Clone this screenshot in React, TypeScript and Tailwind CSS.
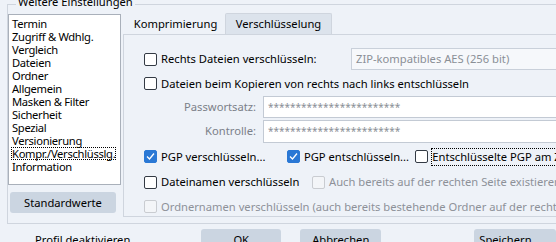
import React from "react";

function Cb({ state }: { state: "on" | "off" | "dis" }) {
  if (state === "on") {
    return (
      <span className="w-[13px] h-[13px] shrink-0 rounded-[2px] bg-[#2a78d5] border border-[#2a78d5] flex items-center justify-center">
        <svg width="11" height="11" viewBox="0 0 11 11">
          <polyline points="2,5.5 4.5,8 9,2.5" fill="none" stroke="white" strokeWidth="1.3" />
        </svg>
      </span>
    );
  }
  if (state === "dis") {
    return <span className="w-[13px] h-[13px] shrink-0 rounded-[2px] border border-[#c9ccd1] bg-[#f3f5f8]" />;
  }
  return <span className="w-[13px] h-[13px] shrink-0 rounded-[2px] border border-[#333a44] bg-white" />;
}

const items = [
  "Termin",
  "Zugriff & Wdhlg.",
  "Vergleich",
  "Dateien",
  "Ordner",
  "Allgemein",
  "Masken & Filter",
  "Sicherheit",
  "Spezial",
  "Versionierung",
  "Kompr./Verschlüsslg.",
  "Information",
];

export default function App() {
  return (
    <div className="w-[556px] h-[242px] overflow-hidden whitespace-nowrap bg-[#eef2f8] text-[11.2px] leading-[16px] text-black font-['Noto_Sans',sans-serif]">
      <div className="relative mt-[4px] ml-[7px] w-[620px] h-[220px] border border-[#cfd5de]">
        <span className="absolute left-[8px] top-[-11px] px-[2px] bg-[#eef2f8] leading-[16px]">Weitere Einstellungen</span>
        <div className="flex">
          <div className="w-[113px] mt-[9px] flex flex-col">
            <div className="h-[171px] bg-white border border-[#a9b0ba] pt-[2px] pl-[2px] tracking-[-0.3px]">
              {items.map((t) => (
                <div key={t} className="h-[13px] leading-[13px] flex">
                  {t === "Kompr./Verschlüsslg." ? (
                    <span className="outline outline-1 outline-dotted outline-black outline-offset-[-1px] px-[1px]">{t}</span>
                  ) : (
                    <span className="px-[1px]">{t}</span>
                  )}
                </div>
              ))}
            </div>
            <div className="mt-[7px] ml-[2px] w-[106px] h-[21px] rounded-[3px] bg-[#cbd5e1] flex items-center justify-center">
              Standardwerte
            </div>
          </div>
          <div className="ml-[2px] mt-[8px] flex flex-col">
            <div className="flex h-[21px] items-end">
              <div className="ml-[3px] w-[99px] h-[20px] flex items-center justify-center">Komprimierung</div>
              <div className="w-[107px] h-[21px] bg-[#dce3ec] border border-b-0 border-[#cfd5de] rounded-t-[2px] flex items-center justify-center">
                Verschlüsselung
              </div>
            </div>
            <div className="w-[500px] h-[183px] border border-[#cfd5de] pt-[13px] pl-[20px] flex flex-col">
              <div className="h-[22px] flex items-center">
                <div className="w-[207px] flex items-center gap-[4px]">
                  <Cb state="off" />
                  <span>Rechts Dateien verschlüsseln:</span>
                </div>
                <div className="w-[260px] h-[22px] border border-[#c9d0da] bg-[#f6f8fb] flex items-center pl-[4px] text-[#8a8f96]">
                  ZIP-kompatibles AES (256 bit)
                </div>
              </div>
              <div className="h-[22px] mt-[3px] flex items-center gap-[4px]">
                <Cb state="off" />
                <span>Dateien beim Kopieren von rechts nach links entschlüsseln</span>
              </div>
              <div className="h-[22px] mt-[1px] flex items-center">
                <div className="w-[112px] text-right text-[#7b8088]">Passwortsatz:</div>
                <div className="ml-[7px] w-[320px] h-[22px] border border-[#c3cad4] bg-white flex items-center pl-[4px] text-[#8a8f96] text-[10px]">
                  ************************
                </div>
              </div>
              <div className="h-[23px] mt-[2px] flex items-center">
                <div className="w-[112px] text-right text-[#7b8088]">Kontrolle:</div>
                <div className="ml-[7px] w-[320px] h-[23px] border border-[#c3cad4] bg-white flex items-center pl-[4px] text-[#8a8f96] text-[10px]">
                  ************************
                </div>
              </div>
              <div className="h-[22px] mt-[3px] flex items-center">
                <div className="w-[147px] flex items-center gap-[4px]">
                  <Cb state="on" />
                  <span>PGP verschlüsseln...</span>
                </div>
                <div className="w-[132px] flex items-center gap-[4px]">
                  <Cb state="on" />
                  <span>PGP entschlüsseln...</span>
                </div>
                <div className="flex items-center gap-[4px]">
                  <Cb state="off" />
                  <span className="outline outline-1 outline-dotted outline-black">Entschlüsselte PGP am Ziel belassen</span>
                </div>
              </div>
              <div className="h-[22px] mt-[4px] flex items-center">
                <div className="w-[168px] flex items-center gap-[4px]">
                  <Cb state="off" />
                  <span>Dateinamen verschlüsseln</span>
                </div>
                <div className="flex items-center gap-[4px] text-[#8d9198]">
                  <Cb state="dis" />
                  <span>Auch bereits auf der rechten Seite existierende</span>
                </div>
              </div>
              <div className="h-[19px] mt-[4px] flex items-center gap-[4px] text-[#8d9198]">
                <Cb state="dis" />
                <span>Ordnernamen verschlüsseln (auch bereits bestehende Ordner auf der rechten Seite)</span>
              </div>
            </div>
          </div>
        </div>
      </div>
      <div className="mt-[5px] flex items-start">
        <div className="ml-[35px] w-[197px] pt-[3px]">Profil deaktivieren</div>
        <div className="w-[95px] h-[22px] rounded-[3px] bg-[#cbd5e1] flex items-center justify-center">OK</div>
        <div className="ml-[19px] w-[96px] h-[22px] rounded-[3px] bg-[#cbd5e1] flex items-center justify-center">Abbrechen</div>
        <div className="ml-[93px] w-[96px] h-[22px] rounded-[3px] bg-[#cbd5e1] flex items-center pl-[5px]">Speichern</div>
      </div>
    </div>
  );
}
